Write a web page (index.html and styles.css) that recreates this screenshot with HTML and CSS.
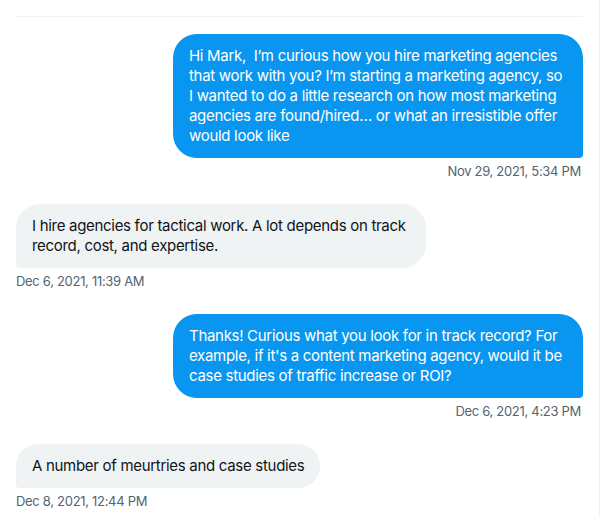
FILE: index.html
```html
<!DOCTYPE html>
<html lang="en">
<head>
<meta charset="utf-8">
<title>Messages</title>
<link rel="stylesheet" href="styles.css">
</head>
<body>
<main class="column">
  <div class="divider"></div>
  <div class="thread">
    <div class="msg sent">
      <div class="bubble">Hi Mark,&nbsp; I’m curious how you hire marketing agencies that work with you? I’m starting a marketing agency, so I wanted to do a little research on how most marketing agencies are found/hired… or what an irresistible offer would look like</div>
      <div class="time">Nov 29, 2021, 5:34 PM</div>
    </div>
    <div class="msg received">
      <div class="bubble">I hire agencies for tactical work. A lot depends on track record, cost, and expertise.</div>
      <div class="time">Dec 6, 2021, 11:39 AM</div>
    </div>
    <div class="msg sent">
      <div class="bubble">Thanks! Curious what you look for in track record? For example, if it's a content marketing agency, would it be case studies of traffic increase or ROI?</div>
      <div class="time">Dec 6, 2021, 4:23 PM</div>
    </div>
    <div class="msg received">
      <div class="bubble">A number of meurtries and case studies</div>
      <div class="time">Dec 8, 2021, 12:44 PM</div>
    </div>
  </div>
</main>
</body>
</html>
```
FILE: styles.css
```css
html, body {
  margin: 0;
  padding: 0;
  background: #ffffff;
}
body {
  font-family: Inter, "Liberation Sans", Arial, sans-serif;
  color: #0f1419;
}
.column {
  width: 600px;
  min-height: 516px;
  border-right: 1px solid #eff3f4;
  padding: 16px 16px 0 16px;
  box-sizing: border-box;
}
.divider {
  height: 1px;
  background: #eff3f4;
}
.thread {
  display: flex;
  flex-direction: column;
  padding-top: 17px;
}
.msg {
  display: flex;
  flex-direction: column;
  padding-bottom: 25px;
}
.msg.sent {
  align-items: flex-end;
}
.msg.received {
  align-items: flex-start;
}
.bubble {
  max-width: 378px;
  padding: 12px 16px;
  font-size: 15px;
  line-height: 20px;
  letter-spacing: -0.3px;
  border-radius: 24px;
  word-wrap: break-word;
}
.sent .bubble {
  background: #0896f0;
  color: #ffffff;
  border-bottom-right-radius: 4px;
}
.received .bubble {
  background: #eff3f4;
  color: #0f1419;
  border-bottom-left-radius: 4px;
}
.time {
  margin-top: 5px;
  font-size: 13px;
  line-height: 16px;
  letter-spacing: -0.3px;
  color: #536471;
}
.sent .time {
  padding-right: 2px;
}
```
